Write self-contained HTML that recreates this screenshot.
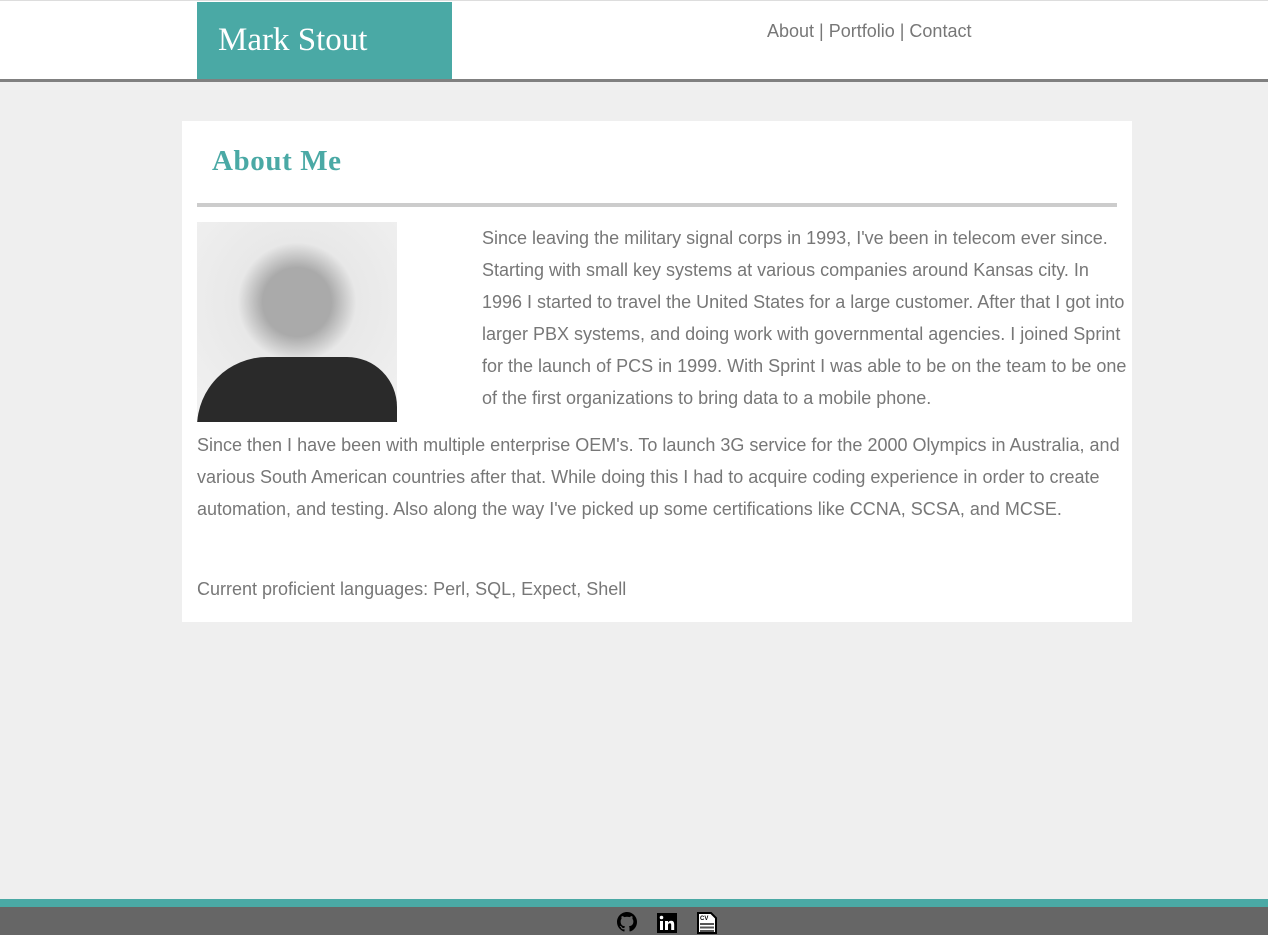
<!DOCTYPE html>
<html><head><style>
body{margin:0;background:#efefef;font-family:"Liberation Sans",sans-serif;height:935px;overflow:hidden;position:relative}
.hdr{position:absolute;left:0;top:0;width:1268px;height:78px;background:#fff;border-top:1px solid #ddd;border-bottom:3px solid #808080;box-sizing:content-box}
.logo{position:absolute;left:197px;top:1px;width:255px;height:77px;background:#4aa9a5;color:#fff;font-family:"Liberation Serif",serif;font-size:33px;line-height:76px;padding-left:21px;box-sizing:border-box}
.nav{position:absolute;left:767px;top:20px;font-size:18px;color:#777}
.box{position:absolute;left:182px;top:121px;width:950px;height:501px;background:#fff}
h1{position:absolute;left:30px;top:24px;margin:0;font-family:"Liberation Serif",serif;font-weight:bold;color:#4aa9a5;font-size:29px;letter-spacing:0.6px}
.rule{position:absolute;left:15px;top:82px;width:920px;height:4px;background:#ccc}
.img{position:absolute;left:15px;top:101px;width:200px;height:200px;background:radial-gradient(circle at 50% 40%,#aaa 0 22%,#e8e8e8 38%,#f2f2f2);overflow:hidden}
.img:after{content:"";position:absolute;left:0px;top:135px;width:200px;height:90px;background:#2a2a2a;border-radius:70px 50px 0 0}
.t{position:absolute;color:#777;font-size:18px;line-height:32px}
.foot{position:absolute;left:0;top:899px;width:1268px;height:8px;background:#4aa9a5}
.fb{position:absolute;left:0;top:907px;width:1268px;height:28px;background:#666}
</style></head><body>
<div class="hdr"><div class="logo">Mark Stout</div><div class="nav">About | Portfolio | Contact</div></div>
<div class="box">
<h1>About Me</h1><div class="rule"></div><div class="img"></div>
<div class="t" style="left:300px;top:101px;width:650px">Since leaving the military signal corps in 1993, I've been in telecom ever since. Starting with small key systems at various companies around Kansas city. In 1996 I started to travel the United States for a large customer. After that I got into larger PBX systems, and doing work with governmental agencies. I joined Sprint for the launch of PCS in 1999. With Sprint I was able to be on the team to be one of the first organizations to bring data to a mobile phone.</div>
<div class="t" style="left:15px;top:308px;width:925px">Since then I have been with multiple enterprise OEM's. To launch 3G service for the 2000 Olympics in Australia, and various South American countries after that. While doing this I had to acquire coding experience in order to create automation, and testing. Also along the way I've picked up some certifications like CCNA, SCSA, and MCSE.</div>
<div class="t" style="left:15px;top:452px">Current proficient languages: Perl, SQL, Expect, Shell</div>
</div>
<div class="foot"></div><div class="fb">
<svg style="position:absolute;left:617px;top:5px" width="20" height="20" viewBox="0 0 16 16"><path fill="#000" d="M8 0C3.6 0 0 3.6 0 8c0 3.5 2.3 6.5 5.5 7.6.4.1.5-.2.5-.4v-1.4c-2.2.5-2.7-1-2.7-1-.4-.9-.9-1.200-.9-1.2-.7-.5.1-.5.1-.5.8.1 1.2.8 1.2.8.7 1.3 1.9.9 2.3.7.1-.5.3-.9.5-1.1-1.8-.2-3.6-.9-3.6-4 0-.9.3-1.6.8-2.1-.1-.2-.4-1 .1-2.1 0 0 .7-.2 2.2.8.6-.2 1.3-.3 2-.3s1.4.1 2 .3c1.5-1 2.2-.8 2.2-.8.4 1.1.2 1.9.1 2.1.5.6.8 1.3.8 2.1 0 3.1-1.9 3.7-3.6 3.9.3.3.5.8.5 1.5v2.2c0 .2.1.5.6.4C13.7 14.5 16 11.5 16 8c0-4.4-3.6-8-8-8z"/></svg>
<svg style="position:absolute;left:657px;top:6px" width="20" height="20" viewBox="0 0 20 20"><rect width="20" height="20" fill="#000"/><rect x="3" y="8" width="3" height="9" fill="#fff"/><circle cx="4.5" cy="4.5" r="1.8" fill="#fff"/><path d="M8 8h3v1.5c.6-1 1.7-1.8 3.2-1.8 2.3 0 3 1.5 3 4V17h-3v-4.8c0-1.2-.3-2-1.4-2s-1.8.8-1.8 2V17H8z" fill="#fff"/></svg>
<svg style="position:absolute;left:697px;top:5px" width="20" height="22" viewBox="0 0 20 22"><path d="M1 1h13l5 5v15H1z" fill="#fff" stroke="#000" stroke-width="2"/><text x="3" y="8" font-size="6" font-family="Liberation Sans" font-weight="bold">CV</text><rect x="3" y="11" width="14" height="2" fill="#555"/><rect x="3" y="14.5" width="14" height="2" fill="#555"/><rect x="3" y="18" width="14" height="2" fill="#555"/></svg>
</div>
</body></html>
